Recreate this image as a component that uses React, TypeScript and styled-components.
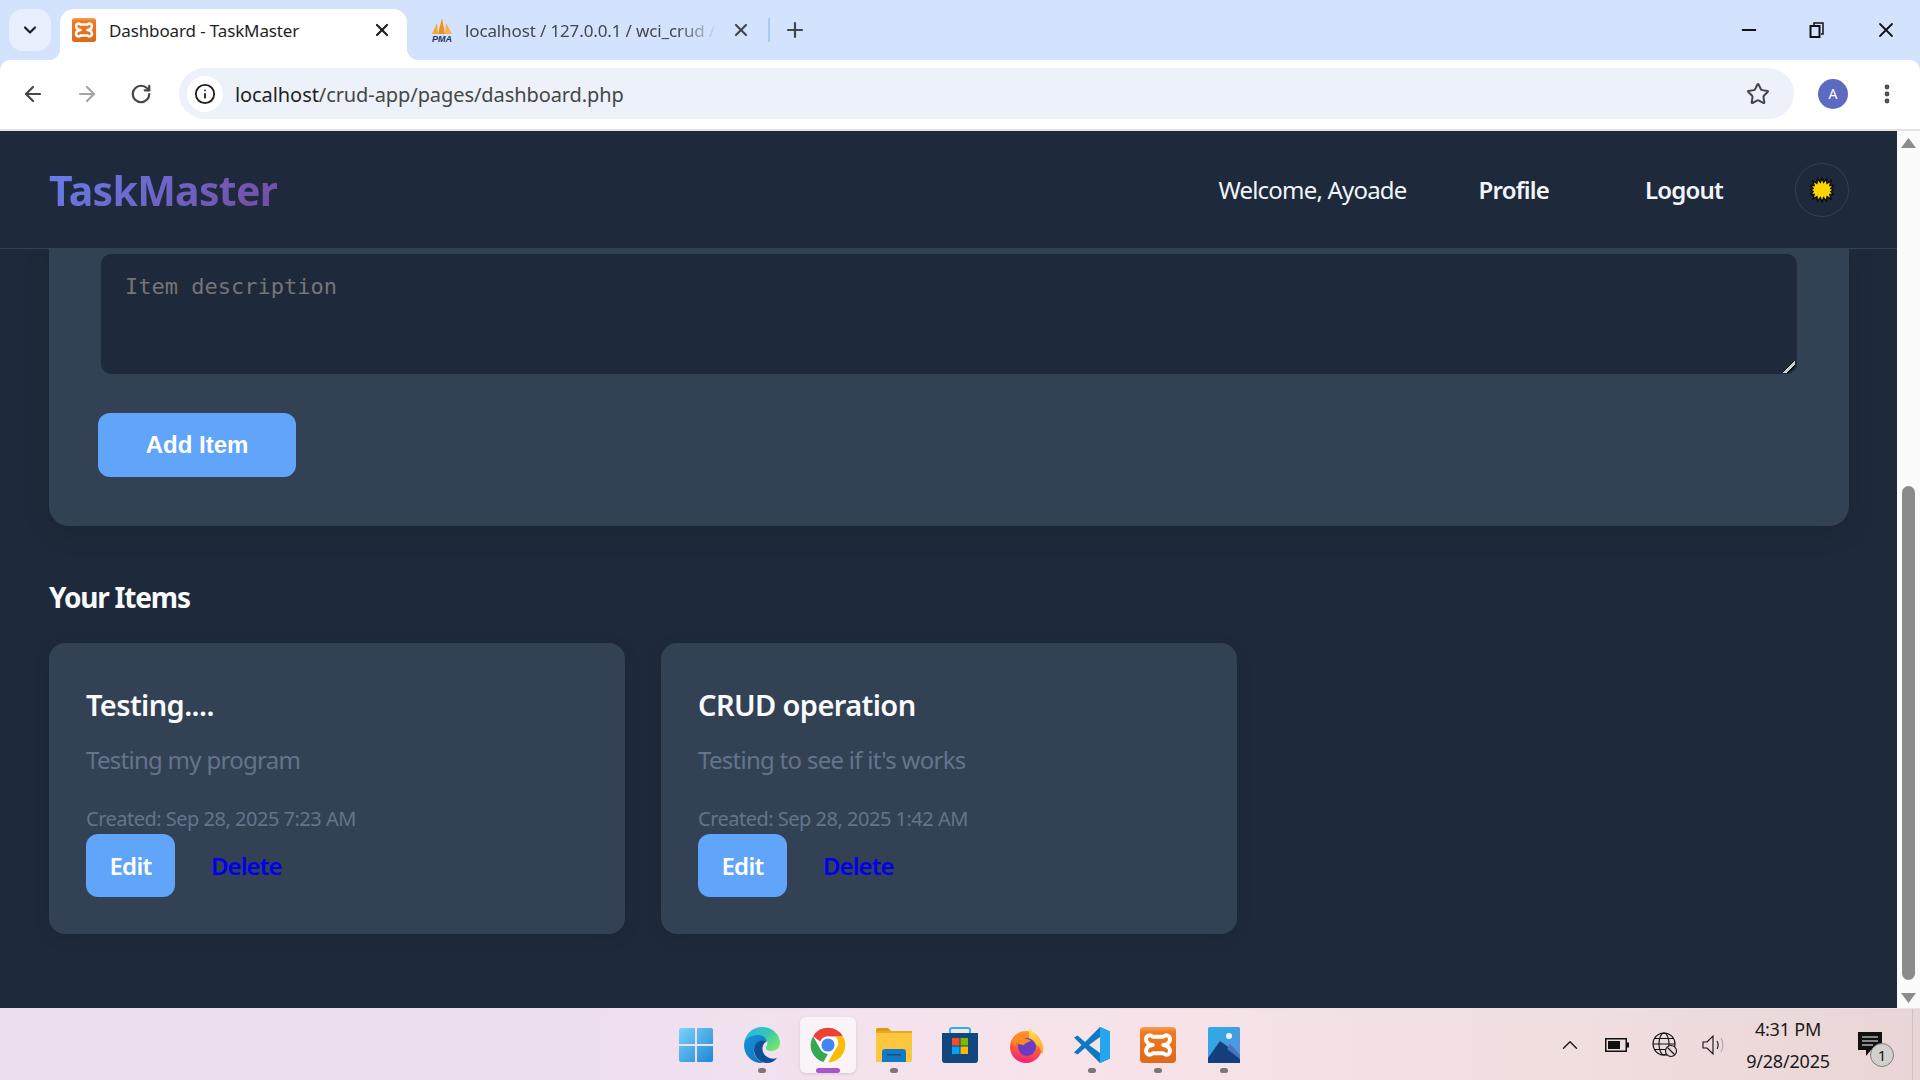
import React from "react";
import styled, { createGlobalStyle } from "styled-components";
import { ArrowLeft, ArrowRight, RotateCw, Star, X, Plus, Minus, ChevronDown, ChevronUp, EllipsisVertical, Info } from "lucide-react";

const UI = `"Noto Sans", "Open Sans", sans-serif`;

const Global = createGlobalStyle`
  html, body { margin: 0; padding: 0; height: 100%; overflow: hidden; background: #d3e3fd; }
  * { box-sizing: border-box; }
  #root { height: 100%; }
`;

const Screen = styled.div`
  width: 1920px; height: 1080px; display: flex; flex-direction: column; background: #d3e3fd;
  overflow: hidden; font-family: ${UI};
`;

/* Browser chrome */
const TabStrip = styled.div`
  height: 60px; flex: none; background: #d3e3fd; display: flex; align-items: flex-end; padding-left: 9px; position: relative;
`;
const TabSearch = styled.div`
  width: 42px; height: 42px; margin-bottom: 9px; border-radius: 14px; background: #e8f0fe;
  display: flex; align-items: center; justify-content: center; color: #1f1f1f;
`;
const ActiveTab = styled.div`
  width: 347px; height: 51px; flex: none; margin-left: 9px; background: #fff; border-radius: 14px 14px 0 0;
  display: flex; align-items: center; padding: 0 0 9px 12px; position: relative;
  &::before, &::after { content: ""; position: absolute; bottom: 0; width: 12px; height: 12px; }
  &::before { left: -12px; background: radial-gradient(circle at 0 0, #d3e3fd 12px, #fff 12.5px); }
  &::after { right: -12px; background: radial-gradient(circle at 100% 0, #d3e3fd 12px, #fff 12.5px); }
  svg { flex: none; }
`;
const InactiveTab = styled.div`
  height: 51px; flex: none; margin-left: 23px; display: flex; align-items: center; padding-bottom: 9px; position: relative;
  svg { flex: none; }
`;
const TabTitle = styled.span<{ $w: number; $fade?: boolean }>`
  width: ${(p) => p.$w}px; flex: none; margin-left: 13px; font-size: 17px; letter-spacing: -0.13px; color: #1f1f1f; white-space: nowrap;
  ${(p) => p.$fade && `margin-left: 11px; -webkit-mask-image: linear-gradient(90deg, #000 84%, transparent 100%); mask-image: linear-gradient(90deg, #000 84%, transparent 100%); color: #444746;`}
`;
const TabClose = styled.span<{ $ml: number }>`
  margin-left: ${(p) => p.$ml}px; display: flex; color: #1f1f1f;
`;
const TabDivider = styled.span`
  width: 2px; height: 24px; margin-left: 17px; background: #a8c7fa; border-radius: 1px;
`;
const NewTab = styled.span`
  margin-left: 13px; display: flex; color: #444746;
`;
const WindowControls = styled.div`
  margin-left: auto; height: 60px; display: flex; align-items: center; padding-right: 22px; gap: 49px; color: #111;
`;
const Toolbar = styled.div`
  height: 71px; flex: none; background: #fff; border-bottom: 2px solid #e3e3e3; border-radius: 10px 10px 0 0;
  display: flex; align-items: center; padding: 0 0 2px 21px; margin-top: 0;
`;
const NavIcon = styled.span<{ $off?: boolean; $ml?: number }>`
  display: flex; margin-left: ${(p) => p.$ml ?? 0}px; color: ${(p) => (p.$off ? "#a3a5a8" : "#444746")};
`;
const Omnibox = styled.div`
  width: 1615px; height: 51px; margin-left: 27px; border-radius: 26px; background: #ecf1fa;
  display: flex; align-items: center; padding-left: 8px; padding-right: 24px;
`;
const InfoChip = styled.span`
  width: 36px; height: 36px; border-radius: 50%; background: #fff; display: flex; align-items: center; justify-content: center; color: #1f1f1f;
`;
const Url = styled.span`
  margin-left: 12px; padding-top: 1px; font-size: 20px; letter-spacing: -0.08px; color: #444746; flex: 1;
  b { font-weight: 400; color: #1f1f1f; }
`;
const Avatar = styled.span`
  width: 30px; height: 30px; margin-left: 24px; border-radius: 50%; background: #5c6bc0; color: #fff;
  display: flex; align-items: center; justify-content: center; font-size: 14px;
`;

/* Viewport */
const Viewport = styled.div`
  flex: 1; min-height: 0; display: flex;
`;
const Page = styled.div`
  flex: 1; min-width: 0; background: #1e293b; overflow: hidden; display: flex; flex-direction: column;
`;
const Nav = styled.nav`
  height: 118px; flex: none; display: flex; align-items: center; padding: 0 48px 0 49px;
  border-bottom: 1px solid #334155; background: #1e293b; position: relative; z-index: 1;
`;
const Logo = styled.div`
  font-size: 41px; font-weight: 700; letter-spacing: -0.7px; line-height: 1; margin-right: auto; padding-top: 2px;
  background: linear-gradient(135deg, #667eea, #764ba2);
  -webkit-background-clip: text; background-clip: text; color: transparent;
`;
const Welcome = styled.span`
  font-size: 24px; color: #f1f5f9; letter-spacing: -0.8px;
`;
const NavLink = styled.a<{ $ml: number }>`
  margin-left: ${(p) => p.$ml}px; font-size: 24px; font-weight: 600; letter-spacing: -0.8px; color: #f1f5f9;
`;
const ThemeToggle = styled.button`
  width: 54px; height: 54px; margin-left: 72px; padding: 0; border-radius: 50%; border: 1px solid #334155; background: transparent;
  display: flex; align-items: center; justify-content: center;
`;
const Panel = styled.section`
  flex: none; margin: 0 48px 0 49px; padding: 5px 52px 49px 49px; background: #334155;
  border-radius: 0 0 20px 20px; box-shadow: 0 6px 28px rgba(0,0,0,.12);
`;
const Field = styled.div`
  width: 1696px; height: 120px; margin: 0 0 39px 3px; position: relative;
  &::after {
    content: ""; position: absolute; right: 2px; bottom: 1px; width: 12px; height: 12px; pointer-events: none;
    background: linear-gradient(135deg, transparent 42%, #0f0f0f 42% 50%, #c9ced6 50% 66%, #0f0f0f 66% 74%, transparent 74%);
  }
`;
const DescArea = styled.textarea`
  display: block; width: 100%; height: 100%; padding: 20px 24px; border: none; border-radius: 10px; outline: none; resize: none;
  background: #1e293b; color: #f1f5f9; font-family: "DejaVu Sans Mono", monospace; font-size: 22px;
  &::placeholder { color: #757575; }
`;
const AddButton = styled.button`
  width: 198px; height: 64px; border: none; border-radius: 12px; background: #60a5fa; color: #fff;
  font-family: "Liberation Sans", Arial, sans-serif; font-weight: 700; font-size: 24px;
`;
const SectionTitle = styled.h2`
  margin: 53px 0 28px 49px; font-size: 28px; line-height: 36px; font-weight: 700; letter-spacing: -1.2px; color: #f8fafc;
`;
const CardGrid = styled.div`
  display: grid; grid-template-columns: repeat(3, 576px); gap: 36px; padding-left: 49px;
`;
const Card = styled.article`
  background: #334155; border-radius: 16px; padding: 35px 37px 37px; box-shadow: 0 4px 18px rgba(0,0,0,.08);
`;
const CardTitle = styled.h3`
  margin: 0; font-size: 29px; line-height: 54px; font-weight: 600; letter-spacing: -0.6px; color: #f8fafc;
`;
const CardDesc = styled.p`
  margin: 12px 0 0; font-size: 24px; line-height: 32px; letter-spacing: -0.72px; color: #64748b;
`;
const CardDate = styled.div`
  margin-top: 29px; font-size: 20px; line-height: 28px; letter-spacing: -0.5px; color: #64748b;
`;
const CardActions = styled.div`
  margin-top: 1px; display: flex; align-items: center;
`;
const EditButton = styled.a`
  width: 89px; height: 63px; border-radius: 12px; background: #60a5fa; color: #fff; font-size: 24px; font-weight: 600; letter-spacing: -0.7px;
  display: flex; align-items: center; justify-content: center;
`;
const DeleteLink = styled.a`
  margin-left: 36px; color: #0000ee; font-size: 24px; font-weight: 600; letter-spacing: -0.95px;
`;

/* Scrollbar */
const ScrollTrack = styled.div`
  width: 23px; flex: none; background: #fbfbfb; display: flex; flex-direction: column; align-items: center; padding: 7px 0 5px;
`;
const ScrollThumb = styled.div`
  width: 13px; height: 496px; margin-top: 338px; background: #8b8b8b; border-radius: 7px;
`;
const ScrollArrow = styled.svg<{ $mt?: number }>`
  width: 15px; height: 10px; flex: none; margin-top: ${(p) => p.$mt ?? 0}px; fill: #8b8b8b;
`;

/* Taskbar */
const Taskbar = styled.footer`
  height: 72px; flex: none; display: grid; grid-template-columns: 1fr auto 1fr; align-items: center;
  background: linear-gradient(90deg, #ecdff0 0%, #eedff0 30%, #f7e3ea 55%, #f2dfe0 80%, #e9d5d5 100%);
  border-top: 1px solid #eee0e6;
`;
const TaskIcons = styled.div`
  display: flex; gap: 10px; grid-column: 2;
`;
const TaskTile = styled.div<{ $active?: boolean; $dot?: boolean }>`
  width: 56px; height: 56px; border-radius: 6px; display: flex; align-items: center; justify-content: center; position: relative;
  ${(p) => p.$active && `background: rgba(255,255,255,.6); box-shadow: 0 1px 3px rgba(0,0,0,.12);`}
  &::after {
    content: ""; position: absolute; bottom: 0; left: 50%; transform: translateX(-50%); height: 5px; border-radius: 3px;
    width: ${(p) => (p.$active ? 24 : 8)}px;
    background: ${(p) => (p.$active ? "#a855c8" : p.$dot ? "#7d7678" : "transparent")};
  }
`;
const Tray = styled.div`
  grid-column: 3; display: flex; align-items: center; justify-content: flex-end; height: 100%; color: #1a1a1a;
`;
const TrayIcon = styled.span<{ $ml: number }>`
  display: flex; margin-left: ${(p) => p.$ml}px;
`;
const Clock = styled.div`
  margin-left: 20px; width: 84px; text-align: center; font-size: 18px; line-height: 32px; color: #1a1a1a; letter-spacing: -0.2px;
`;
const Notify = styled.div`
  margin-left: 23px; margin-right: 23px; width: 36px; height: 100%; position: relative; padding: 23px 0 0 5px;
`;
const NotifyBadge = styled.span`
  position: absolute; left: 17px; top: 34px; width: 24px; height: 24px; border-radius: 50%; background: #d2cfcf; border: 1px solid #7d7d7d;
  font-size: 15px; display: flex; align-items: center; justify-content: center; color: #111;
`;
const Edge = styled.div`
  width: 1px; height: 100%; background: #c9c2c2;
`;

/* Drawn icons */
const RestoreIcon = () => (
  <svg width="16" height="16" viewBox="0 0 16 16" fill="none" stroke="#111" strokeWidth="2"><rect x="1.5" y="4" width="9" height="11" /><path d="M5 3V1h9v11h-2" strokeWidth="1.5" /></svg>
);
const XamppTile = ({ s }: { s: number }) => (
  <svg width={s} height={s} viewBox="0 0 24 24">
    <defs><linearGradient id={`xg${s}`} x1="0" y1="0" x2="0" y2="1"><stop offset="0" stopColor="#f6a05a" /><stop offset=".14" stopColor="#ef7a1f" /><stop offset="1" stopColor="#dc6a1c" /></linearGradient></defs>
    <rect width="24" height="24" rx="2.5" fill={`url(#xg${s})`} />
    <path d="M8.500 6.500C5.500 4 3.300 7 4.300 9.500 5 11 6.500 12 8.500 12 6.500 12 5 13 4.300 14.500 3.300 17 5.500 20 8.500 17.500H15.500C18.500 20 20.700 17 19.700 14.500 19 13 17.500 12 15.500 12 17.500 12 19 11 19.700 9.500 20.700 7 18.500 4 15.500 6.500Z" fill="none" stroke="#fff" strokeWidth="2.600" strokeLinejoin="round" />
  </svg>
);
const PmaIcon = () => (
  <svg width="24" height="24" viewBox="0 0 24 24">
    <path d="M2 16 L7 5 L8 16Z" fill="#f7a733" /><path d="M8 16 L12 0 L15 16Z" fill="#f39019" /><path d="M15 16 L16 5 L22 16Z" fill="#f7b04a" />
    <text x="12" y="23.5" textAnchor="middle" fontFamily="Liberation Sans" fontStyle="italic" fontWeight="700" fontSize="9" fill="#26346c">PMA</text>
  </svg>
);
const SunIcon = () => (
  <svg width="24" height="26" viewBox="0 0 24 26">
    <polygon points="12,1 13.6,5.5 16.5,1.900 17,6.500 21,4 19.800,8.600 23.500,8.500 20.800,11.500 23.500,13 20.800,14.500 23.500,17.500 19.800,17.400 21,22 17,19.500 16.500,24.100 13.600,20.500 12,25 10.400,20.500 7.500,24.100 7,19.500 3,22 4.200,17.400 .5,17.500 3.200,14.500 .5,13 3.200,11.500 .5,8.500 4.200,8.600 3,4 7,6.500 7.500,1.900 10.400,5.500" fill="#ffd500" stroke="#0b0b0b" strokeWidth="1.300" strokeLinejoin="miter" />
  </svg>
);
const WinIcon = () => (
  <svg width="36" height="36" viewBox="0 0 36 36">
    <defs><linearGradient id="wg" x1="0" y1="0" x2="1" y2="1"><stop offset="0" stopColor="#7bd3fb" /><stop offset="1" stopColor="#1f86d6" /></linearGradient></defs>
    <path d="M1 3a2 2 0 0 1 2-2h14v16H1zM19 1h14a2 2 0 0 1 2 2v14H19zM1 19h16v16H3a2 2 0 0 1-2-2zM19 19h16v14a2 2 0 0 1-2 2H19z" fill="url(#wg)" />
  </svg>
);
const EdgeIcon = () => (
  <svg width="36" height="36" viewBox="0 0 36 36">
    <defs>
      <linearGradient id="eg1" x1="0" y1="0" x2="1" y2=".7"><stop offset="0" stopColor="#2fb5ea" /><stop offset=".55" stopColor="#33c6b4" /><stop offset="1" stopColor="#70e86a" /></linearGradient>
      <linearGradient id="eg2" x1="0" y1="0" x2="1" y2="1"><stop offset="0" stopColor="#1793dc" /><stop offset="1" stopColor="#0f6fc0" /></linearGradient>
    </defs>
    <path d="M18 0C28 0 36 7 36 16c0 5-4 8-9 8-4 0-6-2-5-4 1-2 2-3 1-6-2-4-7-5-11-3C5 14 0 12 0 18 0 8 8 0 18 0z" fill="url(#eg1)" />
    <path d="M0 18C0 13 5 9 12 8c5-.5 9 1 11 6-5-2-12 1-13 8-1 6 3 11 9 14-11 1-19-8-19-18z" fill="url(#eg2)" />
    <path d="M23 14c-6-2.500-13 1-13 9 0 7 6 13 13 13 4 0 8-2 10-5-6 2-12-1-14-6-1.500-4 0-9 4-11z" fill="#0b4f96" />
  </svg>
);
const ChromeIcon = () => (
  <svg width="36" height="36" viewBox="0 0 48 48">
    <circle cx="24" cy="24" r="23" fill="#fff" />
    <path d="M24 1a23 23 0 0 1 19.900 11.500H24a11.500 11.500 0 0 0-10.500 6.800L4.200 12.300A23 23 0 0 1 24 1z" fill="#ea4335" />
    <path d="M4.200 12.300 14 29.500a11.500 11.500 0 0 0 10 6l-6 11A23 23 0 0 1 4.200 12.300z" fill="#34a853" />
    <path d="M43.900 12.500A23 23 0 0 1 24 47l10-17.500a11.500 11.500 0 0 0 0-17z" fill="#fbbc04" />
    <circle cx="24" cy="24" r="10" fill="#4285f4" stroke="#fff" strokeWidth="2.500" />
  </svg>
);
const FolderIcon = () => (
  <svg width="36" height="34" viewBox="0 0 36 34">
    <path d="M0 2a2 2 0 0 1 2-2h10l3 3h-15z" fill="#d99a0c" />
    <rect y="3" width="36" height="31" rx="1.500" fill="#fcc63f" /><rect y="3" width="36" height="2" fill="#e6a91f" />
    <path d="M6 34V24a3 3 0 0 1 3-3h18a3 3 0 0 1 3 3v10z" fill="#1479c4" /><rect x="11" y="26" width="14" height="1.500" fill="#0a4f8c" />
  </svg>
);
const StoreIcon = () => (
  <svg width="36" height="36" viewBox="0 0 36 36">
    <path d="M8 8V3a2 2 0 0 1 2-2h16a2 2 0 0 1 2 2v5" fill="none" stroke="#2cb4e8" strokeWidth="2" />
    <path d="M0 6h36v27a3 3 0 0 1-3 3H3a3 3 0 0 1-3-3z" fill="#12467f" />
    <rect x="10" y="11" width="7.500" height="7.500" fill="#f25022" /><rect x="18.500" y="11" width="7.500" height="7.500" fill="#7fba00" />
    <rect x="10" y="19.500" width="7.500" height="7.500" fill="#00a4ef" /><rect x="18.500" y="19.500" width="7.500" height="7.500" fill="#ffb900" />
  </svg>
);
const FirefoxIcon = () => (
  <svg width="36" height="36" viewBox="0 0 36 36">
    <defs>
      <linearGradient id="ff" x1=".6" y1="0" x2=".4" y2="1"><stop offset="0" stopColor="#ff9a2a" /><stop offset=".55" stopColor="#ff5a3c" /><stop offset="1" stopColor="#f01f80" /></linearGradient>
      <linearGradient id="fy" x1="0" y1="0" x2="0" y2="1"><stop offset="0" stopColor="#ffe94d" /><stop offset="1" stopColor="#ff9a2a" /></linearGradient>
    </defs>
    <circle cx="18" cy="20" r="16" fill="url(#ff)" />
    <path d="M22 0c1 4 5 7 9 11 5 6 5 12 3 17-1-6-5-11-10-13-3-1-3-4-3-7 0-3 0-6 1-8z" fill="url(#fy)" />
    <circle cx="19" cy="20" r="9" fill="#6a3cc4" />
    <path d="M4 14c2-4 6-7 10-7-1 2-1 3 1 4 3 1 6 1 8 3-3 1-6 2-7 4-3 0-6-1-7-3-1 1-2 3-2 5-2-2-3-4-3-6z" fill="#ff8a1e" />
  </svg>
);
const VsCodeIcon = () => (
  <svg width="36" height="36" viewBox="0 0 36 36">
    <path d="M26 0 36 4.500v27L26 36 11 21 3.500 27.500 0 25.500 7.500 18 0 10.500 3.500 8.500 11 15z" fill="#0e78c2" />
    <path d="M26 0 36 4.500v27L26 36z" fill="#22a7f0" /><path d="M26 10 15 18l11 8z" fill="#f3e3e5" />
  </svg>
);
const PhotosIcon = () => (
  <svg width="32" height="36" viewBox="0 0 32 36">
    <defs><linearGradient id="ph" x1="0" y1="0" x2="1" y2="1"><stop offset="0" stopColor="#27aee8" /><stop offset="1" stopColor="#5b8fdc" /></linearGradient></defs>
    <rect width="32" height="36" rx="1.500" fill="url(#ph)" /><circle cx="21" cy="9" r="3" fill="#e9f6fd" />
    <path d="M0 31 12 14 26 24 32 32v4H0z" fill="#133f7d" /><path d="M22 17 32 28v4L19 22z" fill="#4a72bd" />
  </svg>
);
const BatteryIcon = () => (
  <svg width="24" height="14" viewBox="0 0 24 14"><rect x=".75" y=".75" width="20.500" height="12.500" fill="none" stroke="#111" strokeWidth="1.500" /><rect x="3" y="3" width="12" height="8" fill="#111" /><rect x="22" y="4.500" width="2" height="5" fill="#111" /></svg>
);
const GlobeIcon = () => (
  <svg width="26" height="26" viewBox="0 0 26 26" fill="none" stroke="#111" strokeWidth="1.100">
    <circle cx="12" cy="12" r="11" /><ellipse cx="12" cy="12" rx="5" ry="11" /><path d="M1 12h22M2.500 6.500h19M2.500 17.500h19" />
    <circle cx="19" cy="19" r="5.500" fill="#ecd8d8" /><path d="M15.500 15.500l7 7" />
  </svg>
);
const VolumeIcon = () => (
  <svg width="24" height="22" viewBox="0 0 24 22" fill="none" stroke="#111" strokeWidth="1.100">
    <path d="M1 8v6h4l6 6V2L5 8z" /><path d="M15 7c1.500 2 1.500 6 0 8" /><path d="M19 4c2.500 4 2.500 10 0 14" stroke="#aaa" />
  </svg>
);
const NotifyIcon = () => (
  <svg width="24" height="24" viewBox="0 0 24 24"><path d="M0 0h24v18H13l-5 6v-6H0z" fill="#111" /><path d="M4 5h16M4 9h16M4 13h11" stroke="#fff" strokeWidth="1" /></svg>
);

const items = [
  { title: "Testing....", desc: "Testing my program", date: "Created: Sep 28, 2025 7:23 AM" },
  { title: "CRUD operation", desc: "Testing to see if it's works", date: "Created: Sep 28, 2025 1:42 AM" },
];

export default function App() {
  return (
    <Screen>
      <Global />
      <TabStrip>
        <TabSearch><ChevronDown size={20} strokeWidth={2.6} /></TabSearch>
        <ActiveTab>
          <XamppTile s={24} />
          <TabTitle $w={250}>Dashboard - TaskMaster</TabTitle>
          <TabClose $ml={13}><X size={20} strokeWidth={2.6} /></TabClose>
        </ActiveTab>
        <InactiveTab>
          <PmaIcon />
          <TabTitle $w={253} $fade>localhost / 127.0.0.1 / wci_crud /</TabTitle>
          <TabClose $ml={13}><X size={20} strokeWidth={2.6} color="#444746" /></TabClose>
          <TabDivider />
          <NewTab><Plus size={24} strokeWidth={2.2} /></NewTab>
        </InactiveTab>
        <WindowControls>
          <Minus size={22} strokeWidth={2} />
          <RestoreIcon />
          <X size={24} strokeWidth={1.8} />
        </WindowControls>
      </TabStrip>
      <Toolbar>
        <NavIcon><ArrowLeft size={24} strokeWidth={2.2} /></NavIcon>
        <NavIcon $off $ml={30}><ArrowRight size={24} strokeWidth={2.2} /></NavIcon>
        <NavIcon $ml={31}><RotateCw size={22} strokeWidth={2.4} /></NavIcon>
        <Omnibox>
          <InfoChip><Info size={22} strokeWidth={2} /></InfoChip>
          <Url><b>localhost</b>/crud-app/pages/dashboard.php</Url>
          <NavIcon><Star size={24} strokeWidth={2} /></NavIcon>
        </Omnibox>
        <Avatar>A</Avatar>
        <NavIcon $ml={27}><EllipsisVertical size={24} strokeWidth={2.8} /></NavIcon>
      </Toolbar>
      <Viewport>
        <Page>
          <Nav>
            <Logo>TaskMaster</Logo>
            <Welcome>Welcome, Ayoade</Welcome>
            <NavLink $ml={72}>Profile</NavLink>
            <NavLink $ml={96}>Logout</NavLink>
            <ThemeToggle aria-label="Toggle theme"><SunIcon /></ThemeToggle>
          </Nav>
          <Panel>
            <Field><DescArea placeholder="Item description" /></Field>
            <AddButton>Add Item</AddButton>
          </Panel>
          <SectionTitle>Your Items</SectionTitle>
          <CardGrid>
            {items.map((it) => (
              <Card key={it.title}>
                <CardTitle>{it.title}</CardTitle>
                <CardDesc>{it.desc}</CardDesc>
                <CardDate>{it.date}</CardDate>
                <CardActions>
                  <EditButton>Edit</EditButton>
                  <DeleteLink>Delete</DeleteLink>
                </CardActions>
              </Card>
            ))}
          </CardGrid>
        </Page>
        <ScrollTrack>
          <ScrollArrow viewBox="0 0 15 10"><path d="M7.500 0 15 10H0z" /></ScrollArrow>
          <ScrollThumb />
          <ScrollArrow viewBox="0 0 15 10" $mt={13}><path d="M0 0h15L7.500 10z" /></ScrollArrow>
        </ScrollTrack>
      </Viewport>
      <Taskbar>
        <TaskIcons>
          <TaskTile><WinIcon /></TaskTile>
          <TaskTile $dot><EdgeIcon /></TaskTile>
          <TaskTile $active><ChromeIcon /></TaskTile>
          <TaskTile $dot><FolderIcon /></TaskTile>
          <TaskTile><StoreIcon /></TaskTile>
          <TaskTile><FirefoxIcon /></TaskTile>
          <TaskTile $dot><VsCodeIcon /></TaskTile>
          <TaskTile $dot><XamppTile s={36} /></TaskTile>
          <TaskTile $dot><PhotosIcon /></TaskTile>
        </TaskIcons>
        <Tray>
          <TrayIcon $ml={0}><ChevronUp size={26} strokeWidth={1.3} /></TrayIcon>
          <TrayIcon $ml={22}><BatteryIcon /></TrayIcon>
          <TrayIcon $ml={23}><GlobeIcon /></TrayIcon>
          <TrayIcon $ml={24}><VolumeIcon /></TrayIcon>
          <Clock>4:31 PM<br />9/28/2025</Clock>
          <Notify>
            <NotifyIcon />
            <NotifyBadge>1</NotifyBadge>
          </Notify>
          <Edge />
          <TrayIcon $ml={7}><span /></TrayIcon>
        </Tray>
      </Taskbar>
    </Screen>
  );
}
